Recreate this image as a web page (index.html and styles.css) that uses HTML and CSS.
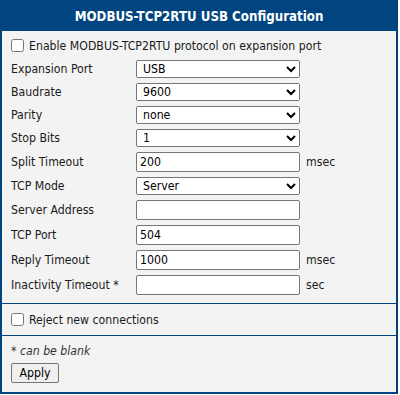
FILE: index.html
```html
<!DOCTYPE html>
<html>
<head>
<meta charset="utf-8">
<link rel="stylesheet" href="styles.css">
</head>
<body>
<div class="panel">
  <div class="head">MODBUS-TCP2RTU USB Configuration</div>
  <div class="sec sec-main">
    <label class="chk"><input type="checkbox"><span>Enable MODBUS-TCP2RTU protocol on expansion port</span></label>
    <div class="grid">
      <span class="lbl">Expansion Port</span>
      <select class="ctl sel"><option>USB</option></select>
      <span class="unit"></span>

      <span class="lbl">Baudrate</span>
      <select class="ctl sel"><option>9600</option></select>
      <span class="unit"></span>

      <span class="lbl">Parity</span>
      <select class="ctl sel"><option>none</option></select>
      <span class="unit"></span>

      <span class="lbl">Stop Bits</span>
      <select class="ctl sel"><option>1</option></select>
      <span class="unit"></span>

      <span class="lbl">Split Timeout</span>
      <input class="ctl txt" type="text" value="200">
      <span class="unit">msec</span>

      <span class="lbl">TCP Mode</span>
      <select class="ctl sel"><option>Server</option></select>
      <span class="unit"></span>

      <span class="lbl">Server Address</span>
      <input class="ctl txt" type="text" value="">
      <span class="unit"></span>

      <span class="lbl">TCP Port</span>
      <input class="ctl txt" type="text" value="504">
      <span class="unit"></span>

      <span class="lbl">Reply Timeout</span>
      <input class="ctl txt" type="text" value="1000">
      <span class="unit">msec</span>

      <span class="lbl">Inactivity Timeout *</span>
      <input class="ctl txt" type="text" value="">
      <span class="unit">sec</span>
    </div>
  </div>
  <div class="sec sec-reject">
    <label class="chk"><input type="checkbox"><span>Reject new connections</span></label>
  </div>
  <div class="sec sec-foot">
    <div class="note">* <i>can be blank</i></div>
    <button class="btn" type="button">Apply</button>
  </div>
</div>
</body>
</html>
```
FILE: styles.css
```css
html, body {
  margin: 0;
  padding: 0;
  background: #ffffff;
}

body {
  font-family: "DejaVu Sans Condensed", "Liberation Sans", sans-serif;
  font-size: 12.2px;
  color: #1a1a1a;
}

.panel {
  width: 394px;
  border: 2px solid #00457f;
  background: #f3f3f3;
}

.head {
  height: 29px;
  margin-top: -2px;
  padding-top: 2px;
  background: #00457f;
  color: #ffffff;
  font-weight: bold;
  font-size: 13.2px;
  display: flex;
  align-items: center;
  justify-content: center;
}

.sec {
  padding: 0 9px;
}

.sec-main {
  padding-top: 6px;
  padding-bottom: 8px;
}

.chk {
  display: flex;
  align-items: center;
  height: 17px;
  gap: 5px;
}

.chk input {
  margin: 0;
  width: 13px;
  height: 13px;
}

.grid {
  margin-top: 6px;
  display: grid;
  grid-template-columns: 119px 164px auto;
  column-gap: 6px;
  row-gap: 5px;
  align-items: center;
}

.ctl {
  box-sizing: border-box;
  width: 164px;
  margin: 0;
  font-family: inherit;
  font-size: 12.2px;
  color: #000;
}

.sel {
  height: 18px;
  padding: 0 0 0 2px;
}

.txt {
  height: 20px;
  padding: 0 3px;
  border: 1px solid #767676;
  border-radius: 2px;
  background: #fff;
}

.sec-reject {
  border-top: 1px solid #00457f;
  height: 31px;
  display: flex;
  align-items: center;
}

.sec-foot {
  border-top: 1px solid #00457f;
  padding-top: 7px;
  padding-bottom: 9px;
}

.note {
  height: 16px;
  line-height: 16px;
  color: #333;
}

.btn {
  margin-top: 4px;
  height: 20px;
  width: 48px;
  padding: 0;
  font-family: inherit;
  font-size: 12.2px;
  color: #000;
  background: #efefef;
  border: 1px solid #767676;
  border-radius: 2px;
}
```
